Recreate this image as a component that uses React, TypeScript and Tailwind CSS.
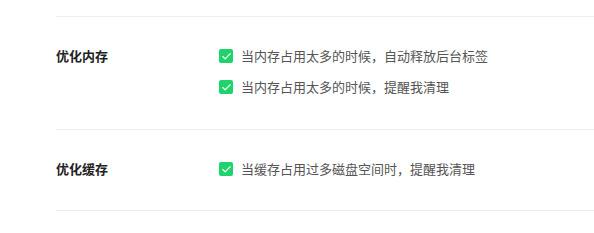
import { Check } from 'lucide-react';

type Section = {
  title: string;
  options: string[];
};

const SECTIONS: Section[] = [
  {
    title: '优化内存',
    options: ['当内存占用太多的时候，自动释放后台标签', '当内存占用太多的时候，提醒我清理'],
  },
  {
    title: '优化缓存',
    options: ['当缓存占用过多磁盘空间时，提醒我清理'],
  },
];

function CheckOption({ label }: { label: string }) {
  return (
    <label className="flex h-5 items-center">
      <span className="flex h-[14px] w-[14px] items-center justify-center rounded-[2px] bg-[#20d26b]">
        <Check className="h-[11px] w-[11px] text-white" strokeWidth={2.5} />
      </span>
      <span className="ml-2 text-[13px] leading-5 text-[#555]">{label}</span>
    </label>
  );
}

export default function App() {
  return (
    <div
      className="min-h-[233px] w-[594px] bg-white pt-4"
      style={{ fontFamily: '"Noto Sans CJK SC", "Noto Sans", sans-serif' }}
    >
      <div className="ml-14 border-t border-[#efefef]">
        {SECTIONS.map((section, i) => (
          <div
            key={section.title}
            className={[
              'flex border-b border-[#efefef]',
              i === 0 ? 'pt-[29px] pb-[32px]' : 'pt-[29px] pb-[31px]',
            ].join(' ')}
          >
            <div className="w-[163px] text-[13px] font-bold leading-5 text-[#222]">
              {section.title}
            </div>
            <div className="flex flex-col gap-[11px]">
              {section.options.map((option) => (
                <CheckOption key={option} label={option} />
              ))}
            </div>
          </div>
        ))}
      </div>
    </div>
  );
}
